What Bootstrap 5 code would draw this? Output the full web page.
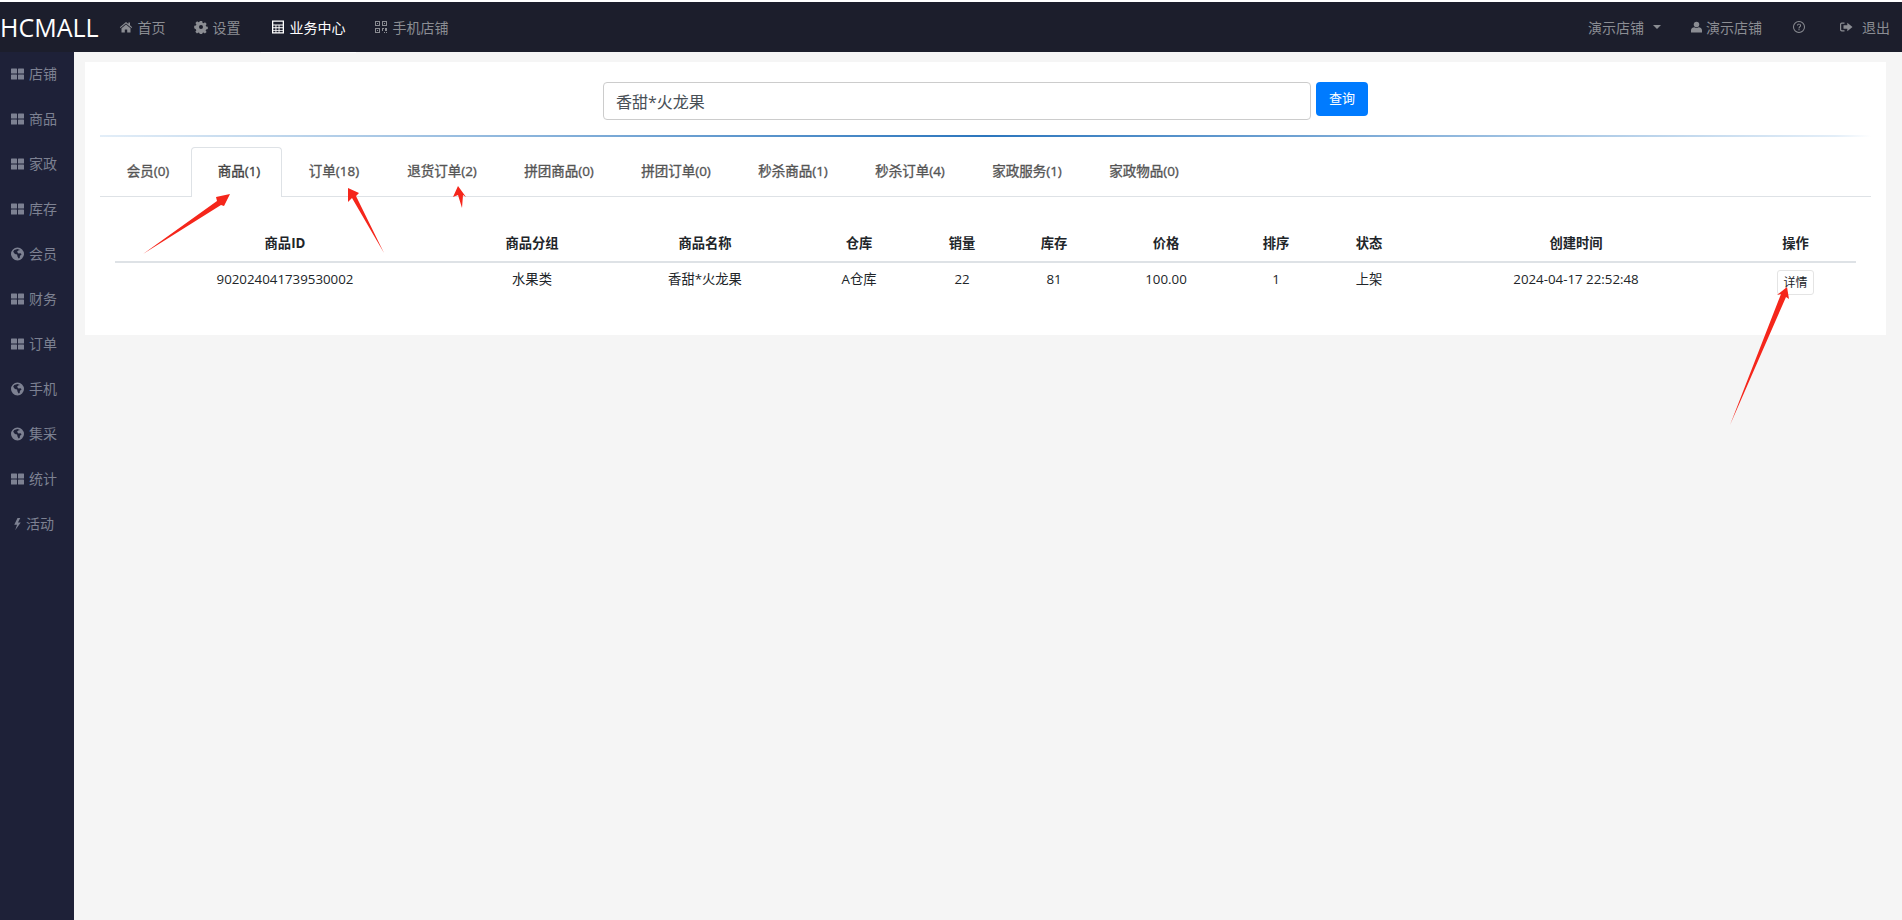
<!DOCTYPE html>
<html lang="zh-CN">
<head>
<meta charset="utf-8">
<title>HCMALL</title>
<link href="https://cdn.jsdelivr.net/npm/bootstrap@5.3.0/dist/css/bootstrap.min.css" rel="stylesheet">
<style>
html,body{height:100%;}
body{margin:0;padding-top:2px;background:#fff;font-family:"Open Sans","Noto Sans CJK SC",sans-serif;font-size:14px;color:#212529;overflow:hidden;position:relative;height:920px;}
.ico{width:14px;height:14px;fill:currentColor;flex:none;}
.topbar{height:50px;background:#1c1e2c;padding:0;flex-wrap:nowrap;}
.topbar .navbar-brand{color:#fff;font-size:25px;line-height:50px;padding:0;margin:0 10px 0 0;}
.top-link{display:flex;align-items:center;gap:5px;color:#8b8d93;text-decoration:none;font-size:14px;position:relative;height:50px;}
.top-link.on{color:#fff;}
.top-link.on::after{content:"";position:absolute;left:-10px;right:-10px;bottom:-1px;height:1px;background:#fff;}
.left-nav{margin-left:10px;gap:28px;}
.wide-gap{margin-left:2px;}
.right-nav{margin-left:auto;gap:30px;padding-right:12px;}
.car{width:0;height:0;border-left:4px solid transparent;border-right:4px solid transparent;border-top:4px solid #8b8d93;margin-left:4px;}
.user-ico{width:11px;margin-right:-1px;}
.help-link{margin-right:3px;}
.shell{height:868px;background:#f5f5f5;}
.sidebar{width:74px;background:#1e2138;flex:none;}
.side-link{height:45px;display:flex;align-items:center;justify-content:center;gap:5px;padding:0 6px 2px 0;color:#7d8192;font-size:14px;text-decoration:none;}
.side-link .ico{width:13px;height:14px;}
.side-link.bolt-link{gap:2px;padding-right:9px;}
.panel{margin:10px 16px 0 11px;height:273px;background:#fff;flex:1;padding:20px 15px 0;}
.search-row{gap:5px;height:53px;padding-left:503px;}
.search-input{width:708px;height:38px;border:1px solid #ccc;border-radius:4px;font-size:16px;color:#495057;padding:6px 12px;font-family:inherit;}
.search-btn{width:52px;height:34px;background:#007bff;color:#fff;border:0;border-radius:4px;padding:0;font-size:13px;}
.grad-rule{height:2px;margin:0;border:0;opacity:1;background:linear-gradient(to right,#e3eef8 0%,#2c76bd 50%,#e3eef8 98%,#fff 100%);}
.tab-row{margin-top:10px;height:50px;border-bottom:1px solid #dee2e6;flex-wrap:nowrap;}
.tab-row .nav-link{color:#555;font-weight:400;font-size:13.5px;padding:13px 0 0 5px;height:50px;border:1px solid transparent;border-bottom:0;text-align:center;border-radius:4px 4px 0 0;-webkit-text-stroke:.35px #555;white-space:nowrap;}
.tab-row .nav-link.active{background:#fff;border-color:#dee2e6;margin-bottom:-1px;color:#444;-webkit-text-stroke:.35px #444;}
.tw1,.tw2{width:91px}.tw3{width:99px}.tw4,.tw5,.tw6,.tw7,.tw8,.tw9,.tw10{width:117px}
.data-table{margin:35px 0 0 15px;width:1741px;table-layout:fixed;border-collapse:collapse;text-align:center;font-size:13.3px;}
.data-table th{font-weight:700;padding:0 0 7px;height:30px;border-bottom:2px solid #dee2e6;vertical-align:bottom;}
.data-table td{padding:7px 0 0;border:0;vertical-align:top;color:#212529;}
.detail-btn{display:inline-block;padding:2px 5px;line-height:19px;height:25px;font-size:12px;border:1px solid #e4e4e4;border-radius:3px;background:#fff;color:#212529;}
.c1{width:340px}.c2{width:154px}.c3{width:192px}.c4{width:116px}.c5{width:90px}.c6{width:94px}.c7{width:130px}.c8{width:90px}.c9{width:96px}.c10{width:318px}.c11{width:121px}
.arrows{position:absolute;left:0;top:0;width:1902px;height:920px;pointer-events:none;}
</style>
</head>
<body>
<svg width="0" height="0" class="position-absolute">
<defs>
<symbol id="i-th" viewBox="0 0 13 14"><rect x="0" y="1.500" width="6" height="5" rx=".5"/><rect x="7" y="1.500" width="6" height="5" rx=".5"/><rect x="0" y="7.500" width="6" height="5" rx=".5"/><rect x="7" y="7.500" width="6" height="5" rx=".5"/></symbol>
<symbol id="i-globe" viewBox="1 1 12 12"><path fill-rule="evenodd" d="M7 1a6 6 0 1 1 0 12A6 6 0 0 1 7 1zM4 3.200 3 5l1.600 2 2 .4.4 2 1 1.800 1-.4.2-2 1.600-1.600-1-.8-2 .2L6.600 5l1-1.200 1.800-.6L7 2.400z"/></symbol>
<symbol id="i-bolt" viewBox="0 0 14 14"><path d="M7 .5 3.500 7.800h3L4.500 13.800 10.500 5.500H7.500L10 .5z"/></symbol>
<symbol id="i-home" viewBox="0 0 14 14"><path d="M7 2 .8 7.200l.7.800L7 3.500 12.500 8l.7-.800-2.200-1.900V2.500H9.400v1.500zM2.500 8.200V12.500h3.300V9.500h2.400v3h3.300V8.200L7 4.500z"/></symbol>
<symbol id="i-cog" viewBox="0 0 14 14"><path fill-rule="evenodd" d="M5.800 1h2.400l.3 1.700 1.100.5 1.400-1 1.700 1.700-1 1.400.5 1.100 1.600.3v2.400l-1.700.3-.5 1.100 1 1.400-1.700 1.700-1.400-1-1.100.5-.2 1.600H5.800l-.3-1.700-1.100-.5-1.400 1-1.700-1.700 1-1.400-.5-1.100L.2 8.200V5.800l1.700-.3.500-1.100-1-1.400 1.700-1.700 1.400 1 1.100-.5zM7 5a2 2 0 1 0 0 4 2 2 0 0 0 0-4z"/></symbol>
<symbol id="i-calc" viewBox="0 0 14 14"><path fill-rule="evenodd" d="M1 .5h12v13H1zM2.300 1.800v2.600h9.400V1.800zM2.300 5.600v1.700h2.200V5.600zm3.100 0v1.700h2.200V5.600zm3.100 0v1.700h3.200V5.600zM2.300 8.200v1.700h2.200V8.200zm3.100 0v1.700h2.200V8.200zm3.100 0v1.700h3.200V8.200zM2.300 10.800v1.500h2.200v-1.500zm3.100 0v1.500h2.200v-1.500zm3.100 0v1.500h3.200v-1.500z"/></symbol>
<symbol id="i-qr" viewBox="0 0 14 14"><path fill-rule="evenodd" d="M1 1h5v5H1zm1 1v3h3V2zM8 1h5v5H8zm1 1v3h3V2zM1 8h5v5H1zm1 1v3h3V9zM8 8h2v1H9v2H8zm3 0h2v3h-2zm-1 4h1v1h-1zm2 0h1v1h-1zM3 3h1v1H3zm7 0h1v1h-1zM3 10h1v1H3z"/></symbol>
<symbol id="i-user" viewBox="0 0 12 14"><circle cx="6" cy="4.300" r="3"/><path d="M0 13v-2.500C0 8.500 2 7.300 3.600 7.300 4.300 7.900 5.200 8.200 6 8.200s1.700-.3 2.400-.9C10 7.300 12 8.500 12 10.500V13z"/></symbol>
<symbol id="i-help" viewBox="0 0 14 14"><path fill-rule="evenodd" d="M7 1a6 6 0 1 1 0 12A6 6 0 0 1 7 1zm0 1a5 5 0 1 0 0 10A5 5 0 0 0 7 2z"/><path d="M4.900 5.600C5 4.300 5.900 3.700 7 3.700c1.300 0 2.100.8 2.100 1.800 0 1.500-1.600 1.500-1.600 2.900H6.500c0-2 1.600-2 1.600-2.900 0-.5-.4-.9-1.100-.9-.6 0-1 .3-1.100 1zM6.400 9.200h1.200v1.100H6.400z"/></symbol>
<symbol id="i-out" viewBox="0 0 14 14"><path d="M5.500 2.500H2.800A1.800 1.800 0 0 0 1 4.300v5.400a1.800 1.800 0 0 0 1.800 1.800h2.700v-1.200H3a.8.800 0 0 1-.8-.8V4.500A.8.800 0 0 1 3 3.700h2.500z"/><path d="M8.300 2.800 13.500 7l-5.200 4.200V8.800H4.500V5.200h3.800z"/></symbol>
</defs>
</svg>

<nav class="navbar topbar">
  <a class="navbar-brand" href="#">HCMALL</a>
  <div class="d-flex left-nav">
    <a class="top-link" href="#"><svg class="ico"><use href="#i-home"/></svg>首页</a>
    <a class="top-link" href="#"><svg class="ico"><use href="#i-cog"/></svg>设置</a>
    <a class="top-link on wide-gap" href="#"><svg class="ico"><use href="#i-calc"/></svg>业务中心</a>
    <a class="top-link" href="#"><svg class="ico"><use href="#i-qr"/></svg>手机店铺</a>
  </div>
  <div class="d-flex right-nav">
    <a class="top-link" href="#"><span>演示店铺</span><span class="car"></span></a>
    <a class="top-link" href="#"><svg class="ico user-ico"><use href="#i-user"/></svg>演示店铺</a>
    <a class="top-link help-link" href="#"><svg class="ico"><use href="#i-help"/></svg></a>
    <a class="top-link" href="#"><svg class="ico"><use href="#i-out"/></svg><span class="ms-1">退出</span></a>
  </div>
</nav>

<div class="d-flex shell">
  <aside class="sidebar">
    <a class="side-link" href="#"><svg class="ico"><use href="#i-th"/></svg>店铺</a>
    <a class="side-link" href="#"><svg class="ico"><use href="#i-th"/></svg>商品</a>
    <a class="side-link" href="#"><svg class="ico"><use href="#i-th"/></svg>家政</a>
    <a class="side-link" href="#"><svg class="ico"><use href="#i-th"/></svg>库存</a>
    <a class="side-link" href="#"><svg class="ico"><use href="#i-globe"/></svg>会员</a>
    <a class="side-link" href="#"><svg class="ico"><use href="#i-th"/></svg>财务</a>
    <a class="side-link" href="#"><svg class="ico"><use href="#i-th"/></svg>订单</a>
    <a class="side-link" href="#"><svg class="ico"><use href="#i-globe"/></svg>手机</a>
    <a class="side-link" href="#"><svg class="ico"><use href="#i-globe"/></svg>集采</a>
    <a class="side-link" href="#"><svg class="ico"><use href="#i-th"/></svg>统计</a>
    <a class="side-link bolt-link" href="#"><svg class="ico"><use href="#i-bolt"/></svg>活动</a>
  </aside>
  <main class="panel">
    <div class="d-flex search-row align-items-start">
      <input class="search-input" type="text" value="香甜*火龙果">
      <button class="search-btn" type="button">查询</button>
    </div>
    <hr class="grad-rule">
    <ul class="nav nav-tabs tab-row">
      <li class="nav-item"><a class="nav-link tw1" href="#">会员(0)</a></li>
      <li class="nav-item"><a class="nav-link active tw2" href="#">商品(1)</a></li>
      <li class="nav-item"><a class="nav-link tw3" href="#">订单(18)</a></li>
      <li class="nav-item"><a class="nav-link tw4" href="#">退货订单(2)</a></li>
      <li class="nav-item"><a class="nav-link tw5" href="#">拼团商品(0)</a></li>
      <li class="nav-item"><a class="nav-link tw6" href="#">拼团订单(0)</a></li>
      <li class="nav-item"><a class="nav-link tw7" href="#">秒杀商品(1)</a></li>
      <li class="nav-item"><a class="nav-link tw8" href="#">秒杀订单(4)</a></li>
      <li class="nav-item"><a class="nav-link tw9" href="#">家政服务(1)</a></li>
      <li class="nav-item"><a class="nav-link tw10" href="#">家政物品(0)</a></li>
    </ul>
    <table class="data-table">
      <colgroup><col class="c1"><col class="c2"><col class="c3"><col class="c4"><col class="c5"><col class="c6"><col class="c7"><col class="c8"><col class="c9"><col class="c10"><col class="c11"></colgroup>
      <thead><tr><th>商品ID</th><th>商品分组</th><th>商品名称</th><th>仓库</th><th>销量</th><th>库存</th><th>价格</th><th>排序</th><th>状态</th><th>创建时间</th><th>操作</th></tr></thead>
      <tbody><tr><td>902024041739530002</td><td>水果类</td><td>香甜*火龙果</td><td>A仓库</td><td>22</td><td>81</td><td>100.00</td><td>1</td><td>上架</td><td>2024-04-17 22:52:48</td><td><button class="detail-btn" type="button">详情</button></td></tr></tbody>
    </table>
  </main>
</div>

<svg class="arrows" viewBox="0 0 1902 920">
  <g fill="#f5261b">
    <polygon points="143,254 217,201 216,197 230,194 224,206 221,205"/>
    <polygon points="384,253 352,198 348,202 348,188 359,193 356,196"/>
    <polygon points="462,208 458,195 453,197 458,186 466,197 463,195"/>
    <polygon points="1730,425 1781,294 1777,295 1787,287 1789,299 1786,297"/>
  </g>
</svg>
<script src="https://cdn.jsdelivr.net/npm/bootstrap@5.3.0/dist/js/bootstrap.bundle.min.js"></script>
</body>
</html>
